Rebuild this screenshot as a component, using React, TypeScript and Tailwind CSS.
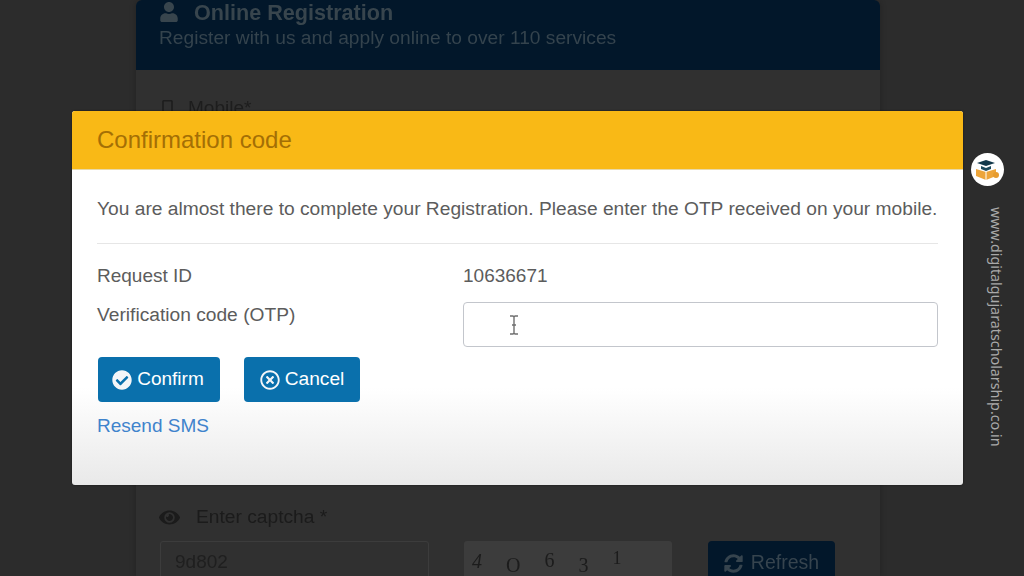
import { FaUser, FaEye, FaCheckCircle, FaRegTimesCircle, FaSyncAlt, FaMobileAlt } from "react-icons/fa";

const font = "font-['Liberation_Sans',Arial,sans-serif]";

function RegistrationPage() {
  return (
    <div className="w-[744px] h-[576px] ml-[136px] bg-[#303030] shadow-[0_0_6px_rgba(0,0,0,0.25)] rounded-t-md overflow-hidden blur-[0.6px]">
      <div className="h-[70px] bg-[#02172a] px-[23px]">
        <div className="flex items-center gap-[15px] h-[25px] text-[#38454d]">
          <FaUser className="text-[20px] -mt-[1px]" />
          <span className="text-[21.6px] leading-[24px] font-bold">Online Registration</span>
        </div>
        <p className="text-[#34434d] text-[19.2px] leading-[24px] mt-[1px]">
          Register with us and apply online to over 110 services
        </p>
      </div>
      <div className="flex items-center gap-[12px] px-[23px] pt-[26px] text-[#1d1d1d] text-[19px] leading-[24px]">
        <FaMobileAlt className="text-[17px]" />
        <span>Mobile*</span>
      </div>
      <div className="flex items-center gap-[16px] px-[23px] mt-[385px] text-[#1b1b1b] text-[19.2px] leading-[24px]">
        <FaEye className="text-[21px]" />
        <span>Enter captcha *</span>
      </div>
      <div className="flex px-[24px] mt-[12px] h-[60px]">
        <div className="w-[269px] h-[60px] border border-[#3c3c3c] rounded-[3px] px-[14px] pt-[8px] text-[#1f1f1f] text-[19px] leading-[24px]">
          9d802
        </div>
        <div className="w-[208px] h-[60px] ml-[35px] bg-[#3c3c3c] rounded-[3px] flex items-start gap-[24px] pl-[8px] text-[#1c1c1c] text-[20px] leading-[20px] font-['Liberation_Serif',serif]">
          <span className="mt-[10px] italic">4</span>
          <span className="mt-[14px]">O</span>
          <span className="mt-[9px]">6</span>
          <span className="mt-[14px]">3</span>
          <span className="mt-[7px] text-[18px]">1</span>
        </div>
        <div className="ml-[36px] w-[127px] h-[44px] bg-[#02172a] rounded-[4px] flex items-center justify-center gap-[8px] text-[#36444e] text-[19.5px]">
          <FaSyncAlt className="text-[19px]" />
          <span>Refresh</span>
        </div>
      </div>
    </div>
  );
}

function ConfirmDialog() {
  return (
    <div className="absolute left-[72px] top-[111px] w-[891px] h-[374px] rounded-[3px] overflow-hidden bg-gradient-to-b from-white from-[74%] to-[#e9e9e9] shadow-[0_0_2px_rgba(0,0,0,0.6)]">
      <div className="h-[59px] bg-[#f9b916] border-b border-[#e8d9a8] flex items-center px-[25px] text-[#a46f05] text-[24px]">
        Confirmation code
      </div>
      <div className="px-[25px]">
        <p className="mt-[27px] text-[#5c5c5c] text-[19.2px] leading-[24px] whitespace-nowrap">
          You are almost there to complete your Registration. Please enter the OTP received on your mobile.
        </p>
        <div className="mt-[22px] border-t border-[#e6e6e6]" />
        <div className="flex mt-[20px] text-[#5c5c5c] text-[19px] leading-[24px]">
          <span className="w-[366px]">Request ID</span>
          <span>10636671</span>
        </div>
        <div className="flex mt-[15px] text-[#5c5c5c] text-[19.2px] leading-[24px]">
          <span className="w-[366px]">Verification code (OTP)</span>
          <div className="relative w-[475px] h-[45px] -mt-[1px] border border-[#c3c6cc] rounded-[4px] bg-white">
            <svg className="absolute left-[45px] top-[12px]" width="10" height="20" viewBox="0 0 10 20" fill="none" stroke="#6f6f6f" strokeWidth="1.4">
              <path d="M1 1h3l1 1 1-1h3M5 2v16M1 19h3l1-1 1 1h3M3 10h4" />
            </svg>
          </div>
        </div>
        <div className="flex gap-[24px] mt-[10px] ml-[1px]">
          <button className="w-[122px] h-[45px] pr-[2px] bg-[#0a70ac] rounded-[4px] flex items-center justify-center gap-[5px] text-white text-[19px]">
            <FaCheckCircle className="text-[20px] text-[#f4f6f8]" />
            Confirm
          </button>
          <button className="w-[116px] h-[45px] bg-[#0a70ac] rounded-[4px] flex items-center justify-center gap-[5px] text-white text-[19.2px]">
            <FaRegTimesCircle className="text-[20px] text-[#f4f6f8]" />
            Cancel
          </button>
        </div>
        <a className="block mt-[12px] text-[#3f83cc] text-[19px] leading-[24px]">Resend SMS</a>
      </div>
    </div>
  );
}

function Watermark() {
  return (
    <div className="absolute left-[963px] top-0 w-[61px] h-[576px] flex flex-col items-center">
      <div className="mt-[153px] ml-[-13px] w-[33px] h-[33px] rounded-full bg-white flex items-center justify-center">
        <svg width="26" height="24" viewBox="0 0 26 24">
          <path d="M3 5l9-3 9 3-9 3z" fill="#12384a" />
          <path d="M7 8v3l5 2 5-2V8l-5 2z" fill="#1d4a5c" />
          <path d="M2 11l10 3 10-3v7l-10 4-10-4z" fill="#eda53a" />
          <path d="M12 14v8" stroke="#fff" strokeWidth="1" />
          <circle cx="22" cy="17" r="3" fill="#e79c2f" />
        </svg>
      </div>
      <span className="mt-[21px] ml-[5px] [writing-mode:vertical-rl] text-[#a9a9a9] text-[14.3px] leading-[16px] font-['Noto_Sans',sans-serif] whitespace-nowrap">
        www.digitalgujaratscholarship.co.in
      </span>
    </div>
  );
}

export default function App() {
  return (
    <div className={`relative w-[1024px] h-[576px] overflow-hidden bg-[#2c2c2c] ${font}`}>
      <RegistrationPage />
      <ConfirmDialog />
      <Watermark />
    </div>
  );
}
